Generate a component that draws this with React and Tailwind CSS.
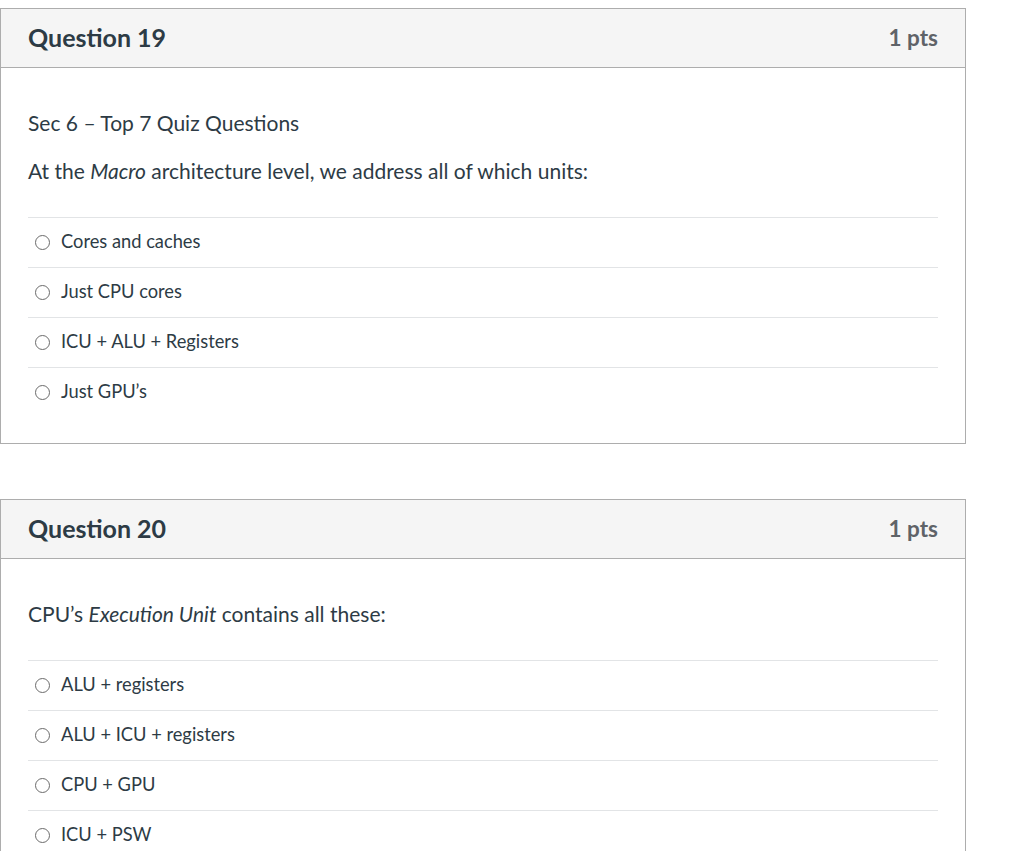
import React from 'react';

const questions = [
  {
    number: 19,
    points: '1 pts',
    intro: 'Sec 6 – Top 7 Quiz Questions',
    prompt: (
      <>
        At the <em>Macro</em> architecture level, we address all of which units:
      </>
    ),
    answers: ['Cores and caches', 'Just CPU cores', 'ICU + ALU + Registers', 'Just GPU’s'],
  },
  {
    number: 20,
    points: '1 pts',
    prompt: (
      <>
        CPU’s <em>Execution Unit</em> contains all these:
      </>
    ),
    answers: ['ALU + registers', 'ALU + ICU + registers', 'CPU + GPU', 'ICU + PSW'],
  },
];

function Radio() {
  return (
    <span className="w-[15px] h-[15px] rounded-full border-[1.5px] border-[#6b6b6b] bg-white shrink-0" />
  );
}

function QuestionCard({ q }) {
  return (
    <div className="w-[966px] border border-[#adadad] bg-white">
      <div className="h-[59px] bg-[#f5f5f5] border-b border-[#adadad] px-[27px] flex items-center justify-between">
        <h2 className="text-[25px] font-bold text-[#2d3b45]">Question {q.number}</h2>
        <span className="text-[22.5px] font-bold text-[#5f6368]">{q.points}</span>
      </div>
      <div className="px-[27px] pt-[40px] pb-[26px]">
        {q.intro && <p className="text-[21px] leading-[30px] mb-[18px]">{q.intro}</p>}
        <p className="text-[21px] leading-[30px] mb-[31px]">{q.prompt}</p>
        <div>
          {q.answers.map((a) => (
            <div key={a} className="h-[50px] border-t border-[#e2e4e6] flex items-center gap-[11px] pl-[7px] pb-[1px]">
              <Radio />
              <span className="text-[18.3px]">{a}</span>
            </div>
          ))}
        </div>
      </div>
    </div>
  );
}

export default function App() {
  return (
    <div className="min-h-[851px] bg-white text-[#2d3b45] pt-[8px]" style={{ fontFamily: 'Lato, "Noto Sans", sans-serif' }}>
      <div className="flex flex-col gap-[55px]">
        {questions.map((q) => (
          <QuestionCard key={q.number} q={q} />
        ))}
      </div>
    </div>
  );
}
